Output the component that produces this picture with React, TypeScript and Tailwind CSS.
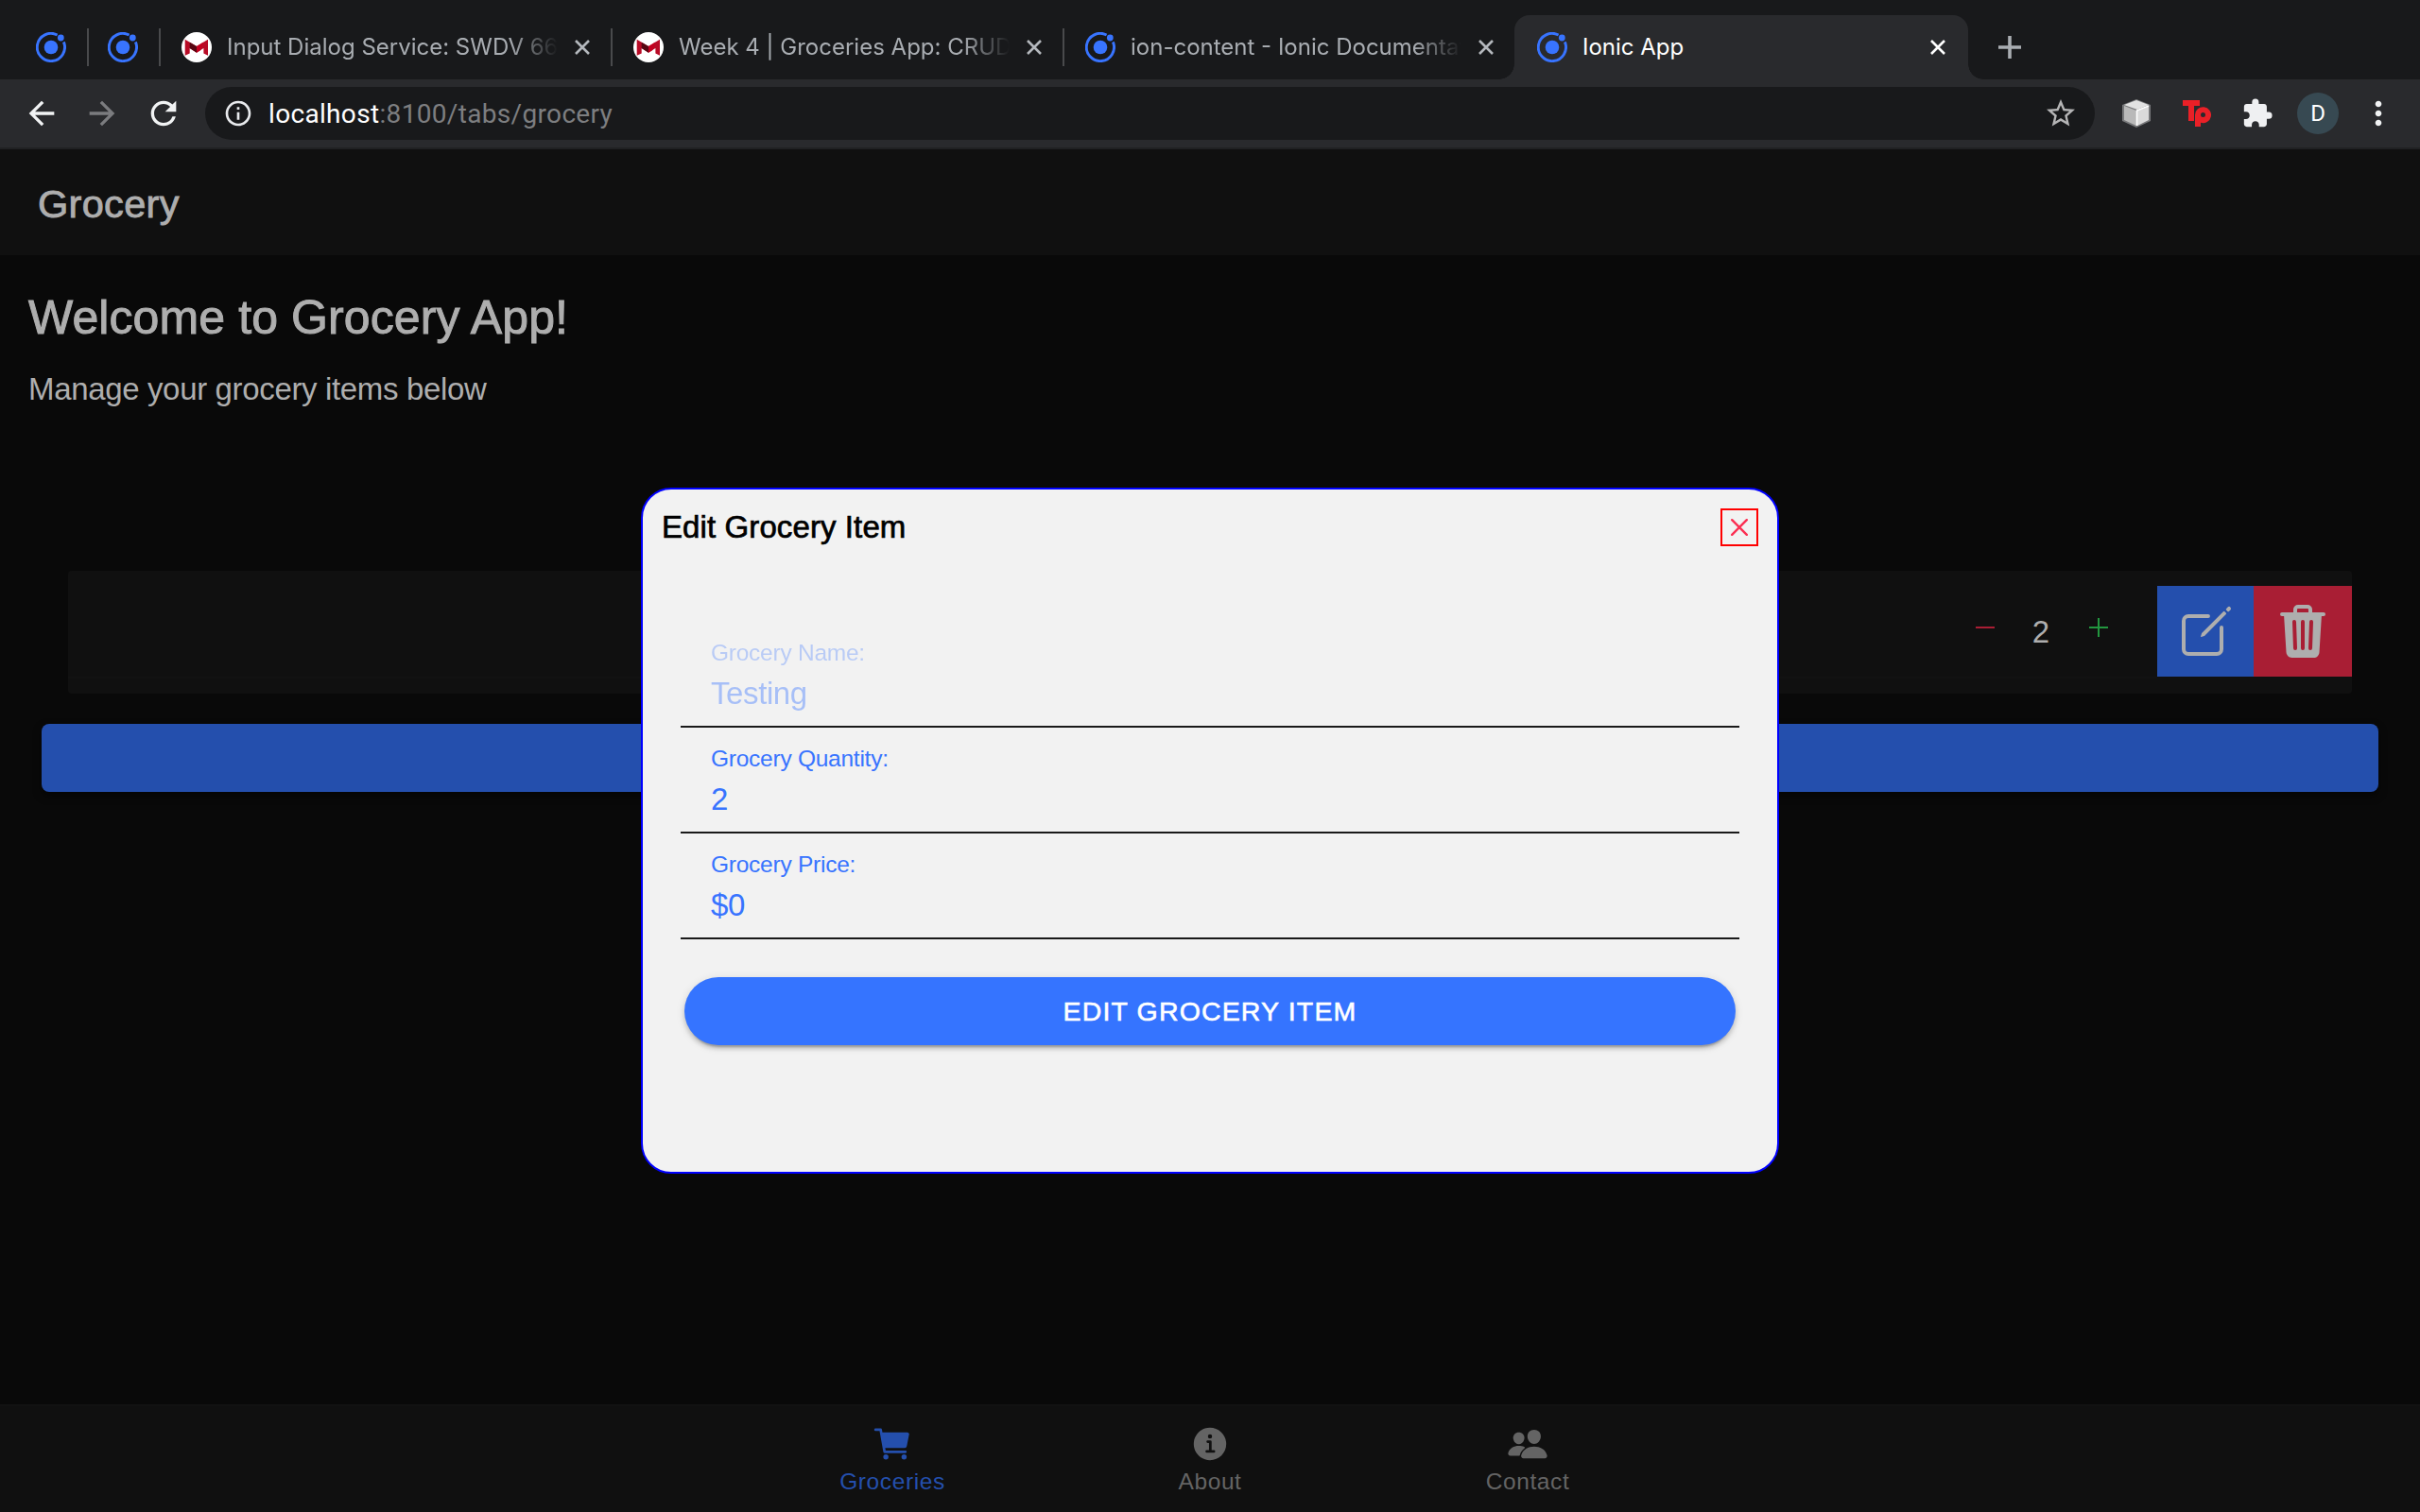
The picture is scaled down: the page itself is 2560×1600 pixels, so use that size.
import React from "react";
import {
  IoCart,
  IoCreateOutline,
  IoInformationCircle,
  IoPeople,
  IoTrash,
} from "react-icons/io5";
import {
  MdArrowBack,
  MdArrowForward,
  MdExtension,
  MdInfoOutline,
  MdMoreVert,
  MdRefresh,
  MdStarOutline,
} from "react-icons/md";

const helvetica = "font-['Liberation_Sans',Arial,sans-serif]";

function IonicLogo() {
  return (
    <svg viewBox="0 0 32 32" className="size-8 shrink-0" fill="none">
      <circle cx="16" cy="16" r="7.3" fill="#3874ff" />
      <circle cx="26.3" cy="6" r="3.4" fill="#3874ff" />
      <path
        d="M22.6 3A14.6 14.6 0 1 0 29.4 10.4"
        stroke="#3874ff"
        strokeWidth="2.9"
      />
    </svg>
  );
}

function MLogo() {
  return (
    <svg viewBox="0 0 32 32" className="size-8 shrink-0">
      <circle cx="16" cy="16" r="16" fill="#fff" />
      <path d="M3.7 7.7L16 15L28 7.7V24.8L23.4 22.4V17L16 21.7L8.7 17V22.4L3.7 24.8Z" fill="#b80b26" />
      <path d="M8.7 10.7L16 15V21.7L8.7 17Z" fill="#560611" />
      <path d="M23.4 10.5L16 15V21.7L20 19.2Z" fill="#c4001f" />
    </svg>
  );
}

function Cross({ color }: { color: string }) {
  return (
    <svg viewBox="0 0 16 16" className="size-4 shrink-0" stroke={color} strokeWidth="2.6">
      <path d="M1 1L15 15M15 1L1 15" />
    </svg>
  );
}

function Tab({ icon, title }: { icon: React.ReactNode; title: string }) {
  return (
    <div className="flex h-full w-[476px] items-center px-[22px]">
      {icon}
      <div className="ml-4 w-[350px] overflow-hidden text-[24px] leading-8 whitespace-nowrap text-[#a9adb2] [mask-image:linear-gradient(to_right,black_300px,transparent_350px)]">
        {title}
      </div>
      <div className="ml-auto flex">
        <Cross color="#b4b8bd" />
      </div>
    </div>
  );
}

function Divider() {
  return <div className="h-10 w-[2px] shrink-0 bg-[#494a4c]" />;
}

function TabStrip() {
  return (
    <div className="flex h-[84px] bg-[#18191b] pt-4 font-[Inter,sans-serif]">
      <div className="flex h-[68px] items-center">
        <div className="flex w-[92px] justify-end pr-[22px]">
          <IonicLogo />
        </div>
        <Divider />
        <div className="flex w-[74px] pl-5">
          <IonicLogo />
        </div>
        <Divider />
        <Tab icon={<MLogo />} title="Input Dialog Service: SWDV 66" />
        <Divider />
        <Tab icon={<MLogo />} title="Week 4 | Groceries App: CRUD" />
        <Divider />
        <Tab icon={<IonicLogo />} title="ion-content - Ionic Documentation" />
      </div>
      <div className="relative flex h-[68px] w-[480px] items-center rounded-t-2xl bg-[#292a2d] px-6 before:absolute before:bottom-0 before:-left-4 before:size-4 before:bg-[radial-gradient(circle_at_0_0,transparent_15.5px,#292a2d_16px)] after:absolute after:-right-4 after:bottom-0 after:size-4 after:bg-[radial-gradient(circle_at_100%_0,transparent_15.5px,#292a2d_16px)]">
        <IonicLogo />
        <div className="ml-4 text-[24px] leading-8 text-white">Ionic App</div>
        <div className="ml-auto flex">
          <Cross color="#ffffff" />
        </div>
      </div>
      <div className="flex h-[68px] items-center pl-8">
        <svg viewBox="0 0 24 24" className="size-6" stroke="#a9adb2" strokeWidth="3.6">
          <path d="M12 0V24M0 12H24" />
        </svg>
      </div>
    </div>
  );
}

function TypingLogo() {
  return (
    <svg viewBox="0 0 30 28" className="h-7 w-[30px]">
      <path d="M0 0H18V6H12V22H6V6H0Z" fill="#ea2027" />
      <path
        fillRule="evenodd"
        d="M13 28V15.5A8.5 8.5 0 1 1 19 23.8V28ZM21.5 13A2.5 2.5 0 1 0 21.5 18A2.5 2.5 0 1 0 21.5 13Z"
        fill="#ea2027"
      />
    </svg>
  );
}

function CubeLogo() {
  return (
    <svg viewBox="0 0 32 32" className="size-8">
      <path d="M16 1L31 7V24L16 31L1 24V7Z" fill="#77787a" />
      <path d="M16 2L29 7L17 12L3 7Z" fill="#e2e2e2" />
      <path d="M3 8L16 13V29L3 23Z" fill="#b9b9b9" />
      <path d="M17 13L29 8V23L17 29Z" fill="#dadada" />
      <path d="M16.5 29V13L29 8" fill="none" stroke="#fff" strokeWidth="1.6" />
    </svg>
  );
}

function Toolbar() {
  return (
    <div className="flex h-[74px] items-center border-b-2 border-[#202123] bg-[#292a2d] pl-6">
      <MdArrowBack className="size-10 text-[#f1f3f4]" />
      <MdArrowForward className="ml-6 size-10 text-[#7b7c7f]" />
      <MdRefresh className="ml-[25px] size-10 text-[#f1f3f4]" />
      <div className="ml-6 flex h-14 w-[1999px] items-center rounded-full bg-[#18191b] pr-[18px] pl-[19px] font-[Roboto,sans-serif]">
        <MdInfoOutline className="size-8 text-[#e8eaed]" />
        <div className="mt-[2px] ml-4 text-[28px] leading-8 tracking-[0.33px] text-[#7d7e80]">
          <span className="text-white">localhost</span>:8100/tabs/grocery
        </div>
        <MdStarOutline className="ml-auto size-9 text-[#b5b5b6]" />
      </div>
      <div className="ml-7 flex items-center">
        <CubeLogo />
        <div className="ml-[33px]">
          <TypingLogo />
        </div>
        <MdExtension className="ml-8 size-[34px] text-[#eff0f2]" />
        <div className="ml-[25px] flex size-11 items-center justify-center rounded-full bg-[#374952] font-[Roboto,sans-serif] text-[24px] leading-none text-white">
          D
        </div>
        <MdMoreVert className="ml-[22px] size-10 text-[#f1f3f4]" />
      </div>
    </div>
  );
}

function GroceryRow() {
  return (
    <div className="mt-[174px] ml-[72px] flex h-[130px] w-[2416px] rounded-[4px] bg-[#101010] pt-4">
      <div className="flex h-[98px] flex-1 items-center justify-end border-b-2 border-[#121212]">
        <div className="mb-2 h-[2px] w-5 bg-[#a91e34]" />
        <div className="mt-[2px] ml-10 text-[33px] leading-9 text-[#aeaeae]">2</div>
        <div className="relative mr-[52px] mb-2 ml-[42px] flex size-5 items-center justify-center">
          <div className="h-[2px] w-5 bg-[#22973f]" />
          <div className="absolute h-5 w-[2px] bg-[#22973f]" />
        </div>
      </div>
      <div className="flex h-24 w-[102px] items-center justify-center bg-[#244fad] pl-[2px] text-[#aeaeae]">
        <IoCreateOutline className="size-16" />
      </div>
      <div className="flex h-24 w-[104px] items-center justify-center bg-[#a91e34] text-[#aeaeae]">
        <IoTrash className="size-16" />
      </div>
    </div>
  );
}

function Field({ label, value, disabled }: { label: string; value: string; disabled?: boolean }) {
  return (
    <div className="h-28 border-b-2 border-[#1a1a1a] pt-[19px] pl-8 text-[#3874ff]">
      <div className={`text-[24.5px] leading-[28px] tracking-[-0.25px] ${disabled ? "opacity-30" : ""}`}>{label}</div>
      <div className={`mt-[10px] text-[33px] leading-[37px] tracking-[-0.4px] ${disabled ? "opacity-40" : ""}`}>
        {value}
      </div>
    </div>
  );
}

function EditModal() {
  return (
    <div className="absolute top-[516px] left-[678px] h-[726px] w-[1204px] rounded-[32px] border-2 border-[#0000ff] bg-[#f2f2f2]">
      <div className="flex justify-between pt-5 pr-5 pl-5">
        <div className="mt-[2px] text-[33px] leading-9 tracking-[0.1px] text-black [-webkit-text-stroke:0.7px_black]">
          Edit Grocery Item
        </div>
        <div className="flex size-10 items-center justify-center border-2 border-[#ff0000]">
          <svg viewBox="0 0 18 18" className="size-[18px]" stroke="#fb2f52" strokeWidth="2.4" strokeLinecap="round">
            <path d="M1.2 1.2L16.8 16.8M16.8 1.2L1.2 16.8" />
          </svg>
        </div>
      </div>
      <div className="mx-10 mt-20">
        <Field label="Grocery Name:" value="Testing" disabled />
        <Field label="Grocery Quantity:" value="2" />
        <Field label="Grocery Price:" value="$0" />
      </div>
      <button className="mx-11 mt-10 block h-[72px] w-[1112px] rounded-full bg-[#3574ff] text-[28.5px] leading-none tracking-[1.15px] text-white shadow-[0_6px_2px_-4px_rgba(0,0,0,0.2),0_4px_4px_rgba(0,0,0,0.14),0_2px_10px_rgba(0,0,0,0.12)] [-webkit-text-stroke:0.6px_white]">
        EDIT GROCERY ITEM
      </button>
    </div>
  );
}

function TabButton({ icon, label, color }: { icon: React.ReactNode; label: string; color: string }) {
  return (
    <div className={`flex w-[336px] flex-col items-center pt-[18px] ${color}`}>
      {icon}
      <div className="mt-1 text-[24.5px] leading-[28px] tracking-[0.6px]">{label}</div>
    </div>
  );
}

export default function App() {
  return (
    <div className={`relative flex h-[1600px] w-[2560px] flex-col overflow-hidden bg-[#090909] ${helvetica}`}>
      <TabStrip />
      <Toolbar />
      <header className="flex h-28 items-center bg-[#101010] pl-10">
        <h1 className="mt-1 text-[41.5px] leading-none tracking-[0.3px] text-[#aeaeae] [-webkit-text-stroke:0.9px_#aeaeae]">
          Grocery
        </h1>
      </header>
      <main className="flex-1">
        <h2 className="mt-[39px] ml-[30px] text-[50px] leading-[54px] tracking-[0.1px] text-[#aeaeae] [-webkit-text-stroke:1px_#aeaeae]">
          Welcome to Grocery App!
        </h2>
        <p className="mt-[31px] ml-[30px] text-[33px] leading-[36px] tracking-[-0.35px] text-[#aeaeae]">
          Manage your grocery items below
        </p>
        <GroceryRow />
        <div className="mx-11 mt-8 h-[72px] rounded-lg bg-[#244fad] shadow-[0_4px_8px_rgba(0,0,0,0.5)]" />
      </main>
      <nav className="flex h-[114px] justify-center border-t-2 border-[#121212] bg-[#101010]">
        <TabButton icon={<IoCart className="size-11" />} label="Groceries" color="text-[#244fad]" />
        <TabButton icon={<IoInformationCircle className="size-11" />} label="About" color="text-[#646464]" />
        <TabButton icon={<IoPeople className="size-11" />} label="Contact" color="text-[#646464]" />
      </nav>
      <EditModal />
    </div>
  );
}
